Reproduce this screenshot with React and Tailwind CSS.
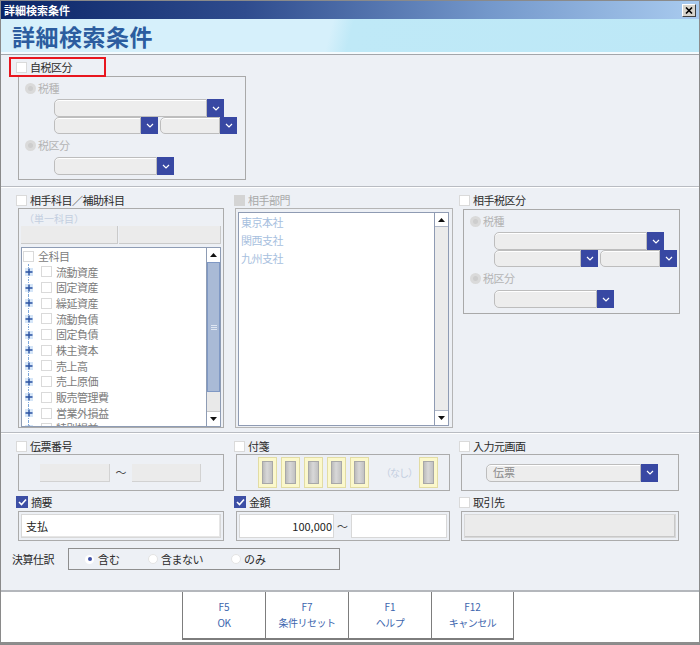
import React from 'react';

function Chevron() {
  return (
    <svg width="8" height="5" viewBox="0 0 8 5">
      <path d="M1 1l3 3 3-3" stroke="#fff" strokeWidth="1.2" fill="none" />
    </svg>
  );
}

function Select({ className, text }) {
  return (
    <div className={`flex ${className}`}>
      <div className="flex-1 flex items-center pl-[6px] rounded-l-[5px] border border-[#bdbdbd] bg-[#ededed] text-[11px] text-[#8c8c8c] shadow-[inset_0_1px_0_#fff]">
        {text}
      </div>
      <div className="w-[17px] flex items-center justify-center bg-[#3848a3]">
        <Chevron />
      </div>
    </div>
  );
}

function Check({ checked, disabled }) {
  if (checked)
    return (
      <div className="w-[12px] h-[12px] bg-[#3d4fa5] flex items-center justify-center">
        <svg width="9" height="8" viewBox="0 0 9 8">
          <path d="M1 4l2.5 2.5L8 1.5" stroke="#fff" strokeWidth="1.6" fill="none" />
        </svg>
      </div>
    );
  return (
    <div
      className={`w-[11px] h-[11px] border ${disabled ? 'bg-[#d4d4d4] border-[#d4d4d4]' : 'bg-white border-[#dadada]'}`}
    />
  );
}

function DisRadio({ label }) {
  return (
    <div className="flex items-center gap-[2px] h-[12px]">
      <div className="w-[11px] h-[11px] rounded-full bg-[#dadada] flex items-center justify-center">
        <div className="w-[5px] h-[5px] rounded-full bg-[#cdcdcd]" />
      </div>
      <span className="text-[11px] text-[#b4b4b4] tracking-[-0.5px]">{label}</span>
    </div>
  );
}

function Label({ checked, disabled, children }) {
  return (
    <div className="flex items-center gap-[3px] h-full">
      <Check checked={checked} disabled={disabled} />
      <span className={`text-[11px] tracking-[-0.5px] ${disabled ? 'text-[#a8a8a8]' : 'text-[#2b2b2b]'}`}>{children}</span>
    </div>
  );
}

function TriUp() {
  return (
    <svg width="7" height="4" viewBox="0 0 7 4">
      <path d="M0 4L3.5 0 7 4z" fill="#111" />
    </svg>
  );
}
function TriDown() {
  return (
    <svg width="7" height="4" viewBox="0 0 7 4">
      <path d="M0 0h7L3.5 4z" fill="#111" />
    </svg>
  );
}

function Tag() {
  return (
    <div className="w-[19px] h-[31px] bg-[#fbf8cc] border border-[#e2dca4] p-[3px]">
      <div className="w-full h-full bg-[linear-gradient(90deg,#bcbcbc,#d8d8d8_45%,#c2c2c2)] border border-[#a8a8a8]" />
    </div>
  );
}

const accounts = ['流動資産', '固定資産', '繰延資産', '流動負債', '固定負債', '株主資本', '売上高', '売上原価', '販売管理費', '営業外損益', '特別損益'];

function TaxFieldset({ className, inset }) {
  return (
    <div className={`border border-[#a9a9a9] ${className}`}>
      <div className="mt-[5px] ml-[6px]">
        <DisRadio label="税種" />
      </div>
      <div className={inset}>
        <Select className="mt-[5px] w-[170px] h-[18px]" />
        <div className="flex gap-[2px]">
          <Select className="w-[104px] h-[17px]" />
          <Select className="w-[77px] h-[17px]" />
        </div>
      </div>
      <div className="mt-[5px] ml-[6px]">
        <DisRadio label="税区分" />
      </div>
      <div className={inset}>
        <Select className="mt-[6px] w-[120px] h-[18px]" />
      </div>
    </div>
  );
}

function Divider() {
  return <div className="h-[2px] border-t border-[#b9bcc2] bg-white" />;
}

export default function App() {
  return (
    <div className="w-[700px] h-[645px] border border-[#8a8a8a] bg-[#edf0f5] flex flex-col font-['Noto_Sans_CJK_JP',sans-serif] overflow-hidden">
      {/* title bar */}
      <div className="h-[18px] flex items-center justify-between px-[3px] bg-[linear-gradient(90deg,#0b2567,#2f4c8e_35%,#7498cb_70%,#a9cbef)]">
        <span className="text-white font-bold text-[11px] leading-none">詳細検索条件</span>
        <div className="w-[14px] h-[13px] bg-[#d8d5cd] border border-t-white border-l-white border-r-[#404040] border-b-[#404040] flex items-center justify-center">
          <svg width="8" height="7" viewBox="0 0 8 7">
            <path d="M1 0.5l6 6M7 0.5l-6 6" stroke="#000" strokeWidth="1.6" />
          </svg>
        </div>
      </div>

      {/* header */}
      <div className="h-[36px] flex items-center pl-[11px] border-b border-[#a3a6ab] shadow-[inset_0_-2px_0_#f4fbfe] bg-[linear-gradient(104deg,#d6f0fb_0%,#d6f0fb_47%,#bfe9f7_50%,#bde8f7_100%)]">
        <span className="text-[23px] font-bold text-[#2c5d9f] tracking-[0.5px] leading-none">詳細検索条件</span>
      </div>

      {/* 自税区分 */}
      <div className="h-[131px] pl-[8px] pt-[2px]">
        <div className="relative z-10 w-[97px] h-[20px] border-2 border-[#e8161e] pl-[5px]">
          <Label>自税区分</Label>
        </div>
        <TaxFieldset className="ml-[9px] -mt-[1px] w-[228px] h-[104px]" inset="ml-[35px]" />
      </div>

      <Divider />

      {/* 相手 section */}
      <div className="h-[244px] flex pl-[15px] pt-[5px]">
        <div className="w-[208px]">
          <div className="h-[15px]">
            <Label>相手科目／補助科目</Label>
          </div>
          <div className="ml-[2px] w-[206px] h-[220px] border border-[#ababab]">
            <div className="h-[17px] pt-[3px] pl-[5px] text-[10px] leading-[13px] text-[#c3cee0]">（単一科目）</div>
            <div className="flex gap-[1px] px-[2px]">
              <div className="w-[97px] h-[18px] bg-[#ebebeb] border-r border-b border-[#cacaca]" />
              <div className="flex-1 h-[18px] bg-[#ebebeb] border-r border-b border-[#cacaca]" />
            </div>
            <div className="mt-[3px] mx-[2px] h-[180px] border border-[#8e9cb4] bg-white flex">
              <div className="flex-1 overflow-hidden pt-[1px]">
                <div className="h-[15px] flex items-center pl-[1px] gap-[4px]">
                  <Check />
                  <span className="text-[11px] text-[#7c7c7c] tracking-[-0.5px]">全科目</span>
                </div>
                {accounts.map((a) => (
                  <div key={a} className="h-[15.7px] flex items-center">
                    <div className="relative w-[13px] h-full flex items-center justify-center">
                      <div className="absolute left-[6px] top-0 bottom-0 border-l border-dotted border-[#7ea8da]" />
                      <div className="relative w-[8px] h-[8px] bg-[#d6e6f8] flex items-center justify-center">
                        <svg width="8" height="8" viewBox="0 0 8 8">
                          <path d="M4 0.5v7M0.5 4h7" stroke="#2950a0" strokeWidth="1.4" />
                        </svg>
                      </div>
                    </div>
                    <div className="ml-[6px]">
                      <Check />
                    </div>
                    <span className="ml-[4px] text-[11px] text-[#7c7c7c] tracking-[-0.5px]">{a}</span>
                  </div>
                ))}
              </div>
              <div className="w-[14px] border-l border-[#8e9cb4] flex flex-col">
                <div className="h-[14px] flex items-center justify-center bg-white">
                  <TriUp />
                </div>
                <div className="h-[130px] bg-[#a9bad6] border border-[#7f98c4] flex items-center justify-center">
                  <div className="w-[6px] h-[5px] border-y border-[#dfe6f2] flex items-center">
                    <div className="w-full border-t border-[#dfe6f2]" />
                  </div>
                </div>
                <div className="flex-1 bg-[#e9e9e9]" />
                <div className="h-[15px] flex items-center justify-center bg-white border-t border-[#c8c8c8]">
                  <TriDown />
                </div>
              </div>
            </div>
          </div>
        </div>

        <div className="ml-[10px] w-[219px]">
          <div className="h-[15px]">
            <Label disabled>相手部門</Label>
          </div>
          <div className="ml-[1px] w-[218px] h-[220px] border border-[#b5b5b5] pt-[3px] pl-[2px] pr-[3px] pb-[1px]">
            <div className="h-full border border-[#8f9bb3] bg-white flex">
              <div className="flex-1 pl-[2px]">
                {['東京本社', '関西支社', '九州支社'].map((d) => (
                  <div key={d} className="h-[18px] flex items-center text-[11px] text-[#a7c0de] tracking-[-0.5px]">
                    {d}
                  </div>
                ))}
              </div>
              <div className="w-[14px] border-l border-[#8f9bb3] flex flex-col">
                <div className="h-[14px] flex items-center justify-center bg-white border-b border-[#b0b8c8]">
                  <TriUp />
                </div>
                <div className="flex-1 bg-[#ebebeb]" />
                <div className="h-[15px] flex items-center justify-center bg-white border-t border-[#b0b8c8]">
                  <TriDown />
                </div>
              </div>
            </div>
          </div>
        </div>

        <div className="ml-[6px] w-[222px]">
          <div className="h-[15px]">
            <Label>相手税区分</Label>
          </div>
          <TaxFieldset className="ml-[4px] mt-[1px] w-[217px] h-[105px]" inset="ml-[30px]" />
        </div>
      </div>

      <Divider />

      {/* lower section */}
      <div className="flex-1 pl-[15px] pt-[5px]">
        <div className="flex h-[15px]">
          <div className="w-[218px]">
            <Label>伝票番号</Label>
          </div>
          <div className="w-[225px]">
            <Label>付箋</Label>
          </div>
          <div>
            <Label>入力元画面</Label>
          </div>
        </div>
        <div className="flex h-[37px]">
          <div className="ml-[2px] w-[206px] border border-[#ababab] flex items-center pl-[21px]">
            <div className="w-[70px] h-[18px] bg-[#ebebeb] border-r border-b border-[#d2d2d2]" />
            <span className="w-[22px] text-center text-[11px] text-[#444]">～</span>
            <div className="w-[69px] h-[18px] bg-[#ebebeb] border-r border-b border-[#d2d2d2]" />
          </div>
          <div className="ml-[12px] w-[214px] border border-[#ababab] flex items-center pl-[21px] gap-[4px]">
            <Tag />
            <Tag />
            <Tag />
            <Tag />
            <Tag />
            <span className="ml-[8px] w-[34px] whitespace-nowrap text-[10px] tracking-[-1px] text-[#c3cee0]">（なし）</span>
            <Tag />
          </div>
          <div className="ml-[11px] w-[218px] border border-[#ababab] flex items-center pl-[24px]">
            <Select className="w-[172px] h-[18px]" text="伝票" />
          </div>
        </div>

        <div className="flex h-[16px] mt-[3px]">
          <div className="w-[218px]">
            <Label checked>摘要</Label>
          </div>
          <div className="w-[225px]">
            <Label checked>金額</Label>
          </div>
          <div>
            <Label>取引先</Label>
          </div>
        </div>
        <div className="flex h-[30px] mt-[1px]">
          <div className="ml-[2px] w-[206px] border border-[#ababab] p-[2px]">
            <div className="h-full bg-white border border-[#d8d8d8] shadow-[inset_-1px_-1px_0_#e6e6e6] flex items-center pl-[4px] text-[11px] text-[#222]">
              支払
            </div>
          </div>
          <div className="ml-[12px] w-[214px] border border-[#ababab] p-[2px] flex items-stretch">
            <div className="w-[95px] bg-white border border-[#d8d8d8] flex items-center justify-end pr-[1px] text-[11px] text-[#222]">
              100,000
            </div>
            <span className="w-[17px] flex items-center justify-center text-[11px] text-[#444]">～</span>
            <div className="flex-1 bg-white border border-[#d8d8d8]" />
          </div>
          <div className="ml-[11px] w-[218px] border border-[#ababab] p-[2px]">
            <div className="h-full bg-[#ebebeb] border border-[#d8d8d8] shadow-[inset_-1px_-1px_0_#c8c8c8]" />
          </div>
        </div>

        <div className="flex items-center mt-[7px] -ml-[4px]">
          <span className="w-[56px] text-[11px] text-[#2b2b2b] tracking-[-0.5px]">決算仕訳</span>
          <div className="w-[272px] h-[22px] border border-[#8e8e8e] flex items-center pl-[16px]">
            <div className="w-[63px] flex items-center gap-[4px]">
              <div className="w-[9px] h-[9px] rounded-full bg-white flex items-center justify-center">
                <div className="w-[4px] h-[4px] rounded-full bg-[#3d4fa5]" />
              </div>
              <span className="text-[11px] text-[#2b2b2b]">含む</span>
            </div>
            <div className="w-[83px] flex items-center gap-[3px]">
              <div className="w-[10px] h-[10px] rounded-full bg-white border border-[#e4e4e4]" />
              <span className="text-[11px] text-[#2b2b2b] tracking-[-0.5px]">含まない</span>
            </div>
            <div className="flex items-center gap-[3px]">
              <div className="w-[10px] h-[10px] rounded-full bg-white border border-[#e4e4e4]" />
              <span className="text-[11px] text-[#2b2b2b]">のみ</span>
            </div>
          </div>
        </div>
      </div>

      {/* footer */}
      <div className="h-[54px] bg-white border-t-2 border-[#b4b7bc] flex pl-[181px] pb-[2px] border-b-2 border-b-[#8d8d8d]">
        {[
          ['F5', 'OK'],
          ['F7', '条件リセット'],
          ['F1', 'ヘルプ'],
          ['F12', 'キャンセル'],
        ].map(([k, t], i) => (
          <div
            key={k}
            className={`w-[83px] border-l border-b-2 border-[#7d7d7d] flex flex-col items-center justify-center gap-[2px] text-[10px] leading-[14px] text-[#3d66ae] ${i === 3 ? 'border-r' : ''}`}
          >
            <span>{k}</span>
            <span className="tracking-[-0.5px]">{t}</span>
          </div>
        ))}
      </div>
    </div>
  );
}
